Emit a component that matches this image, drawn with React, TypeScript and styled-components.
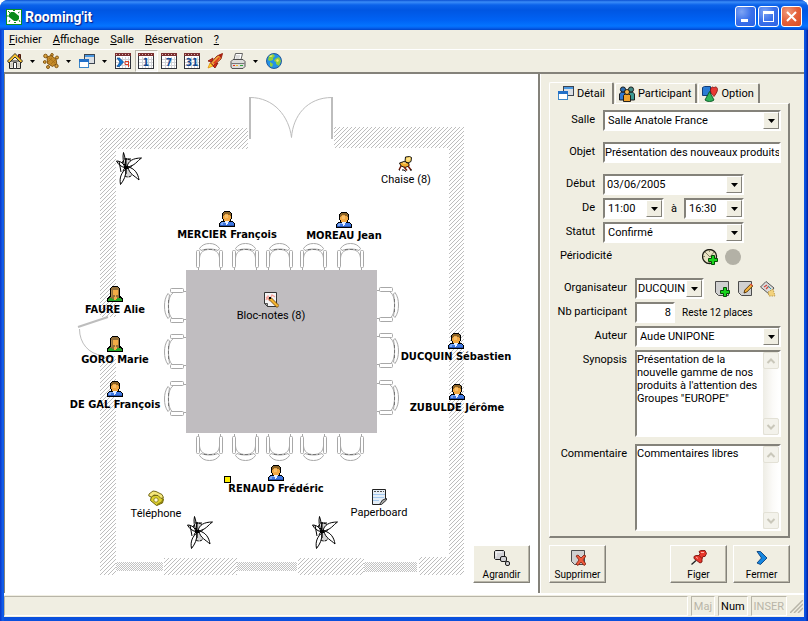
import React from "react";
import styled, { createGlobalStyle, css } from "styled-components";

const face = "#f0eee2";
const shade = "#84827a";
const softShade = "#b8b5a8";
const uiFont = 'Roboto, "Liberation Sans", sans-serif';
const boldFont = '"DejaVu Sans Condensed", "DejaVu Sans", sans-serif';

const GlobalStyle = createGlobalStyle`
  * { box-sizing: border-box; }
  html, body { margin: 0; padding: 0; background: #fff; }
  body, button, input, select, textarea {
    font-family: ${uiFont};
    font-size: 11px;
    line-height: 13px;
    color: #000;
  }
  svg { display: block; flex: none; }
`;

/* ---------- window frame ---------- */

const Window = styled.div`
  display: flex;
  flex-direction: column;
  min-height: 100vh;
  background: linear-gradient(90deg, #0a34c8 0, #1263ee 3px, #0a50dd 4px, #0a50dd calc(100% - 4px), #0c57e6 calc(100% - 3px), #001fa0 100%);
  border-radius: 8px 8px 0 0;
  overflow: hidden;
`;

const TitleBar = styled.header`
  display: flex;
  align-items: center;
  gap: 3px;
  height: 30px;
  padding: 3px 6px 0 6px;
  background: linear-gradient(180deg, #0a4fd2 0, #3a8cf8 2px, #0b62ea 5px, #0056e2 10px, #0062f4 20px, #0474ff 26px, #0560ee 28px, #0044c8 100%);
`;

const Title = styled.h1`
  flex: 1;
  margin: 0;
  font-size: 14px;
  font-weight: 700;
  line-height: 18px;
  color: #fff;
  text-shadow: 1px 1px 1px #0a1883;
`;

const CaptionButtons = styled.div`
  display: flex;
  gap: 2px;
`;

const CaptionButton = styled.button<{ $close?: boolean }>`
  display: grid;
  place-items: center;
  width: 21px;
  height: 21px;
  padding: 0;
  border: 1px solid #fff;
  border-radius: 3px;
  background: ${(p) =>
    p.$close
      ? "radial-gradient(circle at 30% 25%, #ef9a7c 0, #e4603a 50%, #d84c22 100%)"
      : "radial-gradient(circle at 30% 25%, #7ea4f4 0, #3a70ea 50%, #2a62e4 100%)"};
`;

const Body = styled.div`
  flex: 1;
  display: flex;
  flex-direction: column;
  margin: 0 4px 4px 4px;
  background: ${face};
`;

const MenuBar = styled.nav`
  display: flex;
  height: 20px;
  padding: 0 0 0 5px;
  gap: 11px;
  align-items: center;
  border-bottom: 1px solid #fff;
`;

const MenuItem = styled.button`
  padding: 0;
  border: 0;
  background: none;
`;

const ToolBar = styled.div`
  display: flex;
  align-items: center;
  height: 24px;
  border-bottom: 2px solid ${shade};
`;

const ToolButton = styled.button<{ $pressed?: boolean }>`
  display: flex;
  align-items: center;
  width: 23px;
  height: 22px;
  padding: 0 4px 0 3px;
  border: 0;
  background: none;
  ${(p) =>
    p.$pressed &&
    css`
      padding: 0 3px 0 2px;
      border: 1px solid;
      border-color: ${softShade} #fff #fff ${softShade};
      background: #f8f7f2;
    `}
`;

const DropButton = styled.button`
  display: flex;
  align-items: center;
  width: 13px;
  height: 22px;
  padding: 0 0 0 3px;
  border: 0;
  background: none;
`;

const Main = styled.main`
  flex: 1;
  display: flex;
  border-left: 1px solid ${shade};
`;

/* ---------- room plan ---------- */

const Plan = styled.section`
  position: relative;
  flex: 1;
  min-width: 533px;
  min-height: 519px;
  background: #fff;
  border-right: 2px solid ${shade};
`;

const Place = styled.div<{ $x: number; $y: number; $bold?: boolean }>`
  position: absolute;
  left: ${(p) => p.$x - 70}px;
  top: ${(p) => p.$y}px;
  width: 140px;
  display: flex;
  flex-direction: column;
  align-items: center;
  line-height: 15px;
  white-space: nowrap;
  ${(p) =>
    p.$bold &&
    css`
      font-family: ${boldFont};
      font-weight: 700;
    `}
`;

const Enlarge = styled.div`
  position: absolute;
  right: 8px;
  bottom: 10px;
`;

/* ---------- side panel ---------- */

const Side = styled.aside`
  flex: 0 0 264px;
  display: flex;
  flex-direction: column;
  padding: 7px 14px 10px 8px;
  border-left: 1px solid #fff;
`;

const Tabs = styled.div`
  display: flex;
  align-items: flex-end;
  height: 22px;
`;

const Tab = styled.button<{ $active?: boolean }>`
  display: flex;
  align-items: center;
  gap: 3px;
  height: ${(p) => (p.$active ? 22 : 20)}px;
  padding: ${(p) => (p.$active ? "0 7px 1px 8px" : "0 4px 0 3px")};
  margin-bottom: ${(p) => (p.$active ? -1 : 0)}px;
  margin-right: 1px;
  border: 0;
  border-top: 1px solid #fff;
  border-left: 1px solid #fff;
  border-right: 2px solid ${shade};
  border-radius: 2px 2px 0 0;
  background: ${face};
  z-index: ${(p) => (p.$active ? 1 : 0)};
`;

const Sheet = styled.form`
  flex: 1;
  display: flex;
  flex-direction: column;
  gap: 11px;
  padding: 6px 7px 5px 4px;
  border: 1px solid #fff;
  border-right: 2px solid ${shade};
  border-bottom: 2px solid ${shade};
`;

const Group = styled.div`
  display: flex;
  flex-direction: column;
  gap: 3px;
`;

const Row = styled.div<{ $label?: number; $after?: number }>`
  display: grid;
  grid-template-columns: ${(p) => p.$label ?? 41}px 1fr;
  column-gap: 8px;
  min-height: 21px;
  margin-bottom: ${(p) => p.$after ?? 0}px;
`;

const Label = styled.label`
  padding-top: 3px;
  text-align: right;
  white-space: nowrap;
`;

const Cells = styled.div`
  display: flex;
  align-items: center;
`;

const sunken = css`
  border: 2px solid;
  border-color: ${shade} #fff #fff ${shade};
  background: #fff;
`;

const Combo = styled.div<{ $width?: number }>`
  ${sunken}
  display: grid;
  grid-template-columns: minmax(0, 1fr) 16px;
  width: ${(p) => (p.$width ? `${p.$width}px` : "100%")};
  height: 21px;
`;

const comboText = css`
  width: 100%;
  height: 17px;
  padding: 0 0 0 3px;
  border: 0;
  outline: 0;
  background: transparent;
`;

const ComboSelect = styled.select<{ $tight?: boolean }>`
  ${comboText}
  padding-left: ${(p) => (p.$tight ? 1 : 3)}px;
  grid-area: 1 / 1 / 2 / 2;
  appearance: none;
  overflow: hidden;
  text-overflow: clip;
`;

const ComboInput = styled.input`
  ${comboText}
  padding-left: 2px;
`;

const raised = css`
  border: 1px solid;
  border-color: #fff ${shade} ${shade} #fff;
  background: ${face};
`;

const ArrowBox = styled.span`
  ${raised}
  display: grid;
  place-items: center;
  height: 17px;
  pointer-events: none;
`;

const ArrowButton = styled.button`
  ${raised}
  display: grid;
  place-items: center;
  height: 17px;
  padding: 0;
`;

const TextBox = styled.input<{ $width?: number; $right?: boolean }>`
  ${sunken}
  width: ${(p) => (p.$width ? `${p.$width}px` : "100%")};
  height: 21px;
  padding: 0 ${(p) => (p.$right ? 2 : 0)}px 0 0;
  outline: 0;
  text-align: ${(p) => (p.$right ? "right" : "left")};
`;

const To = styled.label`
  width: 20px;
  text-align: center;
`;

const Hint = styled.span`
  margin-left: 7px;
  font-size: 10px;
`;

const Actions = styled.div<{ $end?: boolean }>`
  display: flex;
  gap: 7px;
  margin-left: ${(p) => (p.$end ? "auto" : "10px")};
  padding-right: ${(p) => (p.$end ? 40 : 0)}px;
`;

const IconButton = styled.button`
  width: 16px;
  height: 16px;
  padding: 0;
  border: 0;
  background: none;
`;

const Memo = styled.div`
  ${sunken}
  display: flex;
  height: 87px;
`;

const MemoText = styled.textarea`
  flex: 1;
  min-width: 0;
  padding: 1px 0 0 0;
  border: 0;
  outline: 0;
  resize: none;
  overflow: hidden;
  background: transparent;
`;

const ScrollStrip = styled.div`
  display: flex;
  flex-direction: column;
  justify-content: space-between;
  width: 16px;
  background: linear-gradient(90deg, #eeede5, #fbfaf8 60%, #fff);
`;

const ScrollButton = styled.button`
  display: grid;
  place-items: center;
  width: 16px;
  height: 17px;
  padding: 0;
  border: 1px solid #e3e1d6;
  border-radius: 2px;
  background: #f3f2eb;
`;

const Footer = styled.div`
  display: flex;
  gap: 6px;
  margin-top: 7px;
`;

const BigButton = styled.button<{ $push?: boolean }>`
  display: flex;
  flex-direction: column;
  align-items: center;
  gap: 2px;
  width: 57px;
  height: 38px;
  margin-right: ${(p) => (p.$push ? "auto" : "0")};
  padding: 4px 0 0 0;
  border: 1px solid;
  border-color: #fff ${shade} ${shade} #fff;
  box-shadow: inset -1px -1px 0 ${softShade};
  background: ${face};
  font-size: 10px;
`;

/* ---------- status bar ---------- */

const StatusBar = styled.footer`
  display: flex;
  align-items: center;
  gap: 3px;
  height: 24px;
  padding: 1px 1px 1px 0;
  border-top: 2px solid #fff;
`;

const StatusCell = styled.span<{ $grow?: boolean; $off?: boolean }>`
  flex: ${(p) => (p.$grow ? "1" : "none")};
  height: 20px;
  padding: 3px 2px 0 2px;
  border: 1px solid;
  border-color: ${softShade} #fff #fff ${softShade};
  color: ${(p) => (p.$off ? softShade : "#000")};
`;

/* ---------- icons ---------- */

const Svg = ({ children }: { children: React.ReactNode }) => (
  <svg width="16" height="16" viewBox="0 0 16 16" aria-hidden="true">
    {children}
  </svg>
);

const DownArrow = ({ small }: { small?: boolean }) => (
  <svg width={small ? 5 : 7} height={small ? 3 : 4} viewBox="0 0 7 4" aria-hidden="true">
    <path d="M0 0h7L3.500 4z" fill="#000" />
  </svg>
);

const Logo = () => (
  <Svg>
    <rect width="16" height="16" fill="#0a9020" />
    <rect x="1" y="1" width="14" height="14" fill="#fff" />
    <path d="M3 5l2-2h3l5 4v3l-2 2H8L3 8z" fill="#0a8a1c" />
    <path d="M7 1.500h2M2 6v2M4 11l-1 2M8 13.500h2M12 4l1.500-1M2 2l2 2M13 11l1 2" stroke="#0a8a1c" />
  </Svg>
);

const House = () => (
  <Svg>
    <path d="M11.500 1.500h2v5h-2z" fill="#c23c22" stroke="#4a1a0a" />
    <path d="M2.500 8h11v7.500h-11z" fill="#e6e3d9" stroke="#222" />
    <path d="M.5 8L8 .5 15.500 8 14 10 8 4 2 10z" fill="#f7c230" stroke="#222" strokeWidth=".9" />
    <path d="M6.500 9.500h3v6h-3z" fill="#fff" stroke="#333" />
    <path d="M3.500 11h2M10.500 11h2M3.500 13h2M10.500 13h2" stroke="#b4b0a4" />
  </Svg>
);

const TableSet = () => (
  <Svg>
    <g fill="#dba642" stroke="#7a4c08" strokeWidth=".9">
      <circle cx="2.500" cy="3" r="1.800" />
      <circle cx="9" cy="1.800" r="1.300" />
      <circle cx="14" cy="4.500" r="1.500" />
      <circle cx="1.800" cy="9" r="1.400" />
      <circle cx="5" cy="14" r="1.500" />
      <circle cx="13.500" cy="13" r="1.700" />
      <path d="M4 4l4-1.500 5 3.500.8 4.500-4.300 3-5-3z" fill="#c48a28" />
    </g>
    <path d="M6 5l6 5M5 9l4-4M8 11l4-4" stroke="#a06812" strokeWidth=".7" />
  </Svg>
);

const Windows = () => (
  <Svg>
    <rect x="5.500" y="1.500" width="10" height="9" fill="#dcdfe2" stroke="#3c4450" />
    <rect x="6" y="2" width="9" height="2" fill="#4a98e0" />
    <rect x=".5" y="6.500" width="9" height="8" fill="#fff" stroke="#3b86c8" />
    <rect x="0" y="6" width="10" height="3" fill="#2270c8" />
  </Svg>
);

const Calendar = ({ text }: { text?: string }) => (
  <Svg>
    <rect x=".5" y=".5" width="15" height="15" fill="#fff" stroke="#31333a" />
    <path d="M1 6.500h14M1 9.500h14M1 12.500h14M4.500 4v11M7.500 4v11M10.500 4v11M13.500 4v11" stroke="#d2d4d8" />
    <rect x="0" y="0" width="16" height="3" fill="#7a3030" />
    <path d="M1 1.500h14" stroke="#e0b8b4" strokeDasharray="1 2" />
    {text ? (
      <text x="8" y="13" textAnchor="middle" fontFamily="DejaVu Sans Condensed" fontWeight="700" fontSize="10" fill="#134a92">
        {text}
      </text>
    ) : (
      <>
        <path d="M2 5h2.500l4 4-4 4.500H2L5 9z" fill="#0d78d8" stroke="#0a3f80" strokeWidth=".7" />
        <path d="M13 8.500h-3v3h3M13.500 8v6" stroke="#d83c24" fill="none" />
      </>
    )}
  </Svg>
);

const Rocket = () => (
  <Svg>
    <path d="M1 15l2-5 3 3z" fill="#ffd929" stroke="#e08a10" strokeWidth=".8" />
    <path d="M1 8l5-3-1 4zM7 10l4 0-3 5-2-2z" fill="#d62b18" stroke="#7d1208" strokeWidth=".8" />
    <path d="M3.500 10L10 3 15.500.5 14 6 6.500 12.500z" fill="#f0a83c" stroke="#8c1c0c" strokeWidth=".9" />
    <path d="M6 10l6-6 1 1-5 6z" fill="#e03a20" />
    <path d="M11.500 2.300L15.500.5 14 5z" fill="#a81c10" />
  </Svg>
);

const Printer = () => (
  <Svg>
    <path d="M5.500.5h7l-1.500 6h-7z" fill="#fff" stroke="#555" strokeWidth=".9" />
    <path d="M6 3h4M5.500 5h4" stroke="#aaa" strokeWidth=".8" />
    <path d="M1 8.500l2-2h10l2 2v5l-2 2H2l-1-1.500z" fill="#dcdcda" stroke="#444" strokeWidth=".9" />
    <path d="M1.500 10.500h13" stroke="#777" />
    <rect x="3" y="12" width="2" height="1" fill="#ea3323" />
    <rect x="6" y="12" width="2" height="1" fill="#f3c022" />
    <rect x="10" y="12" width="3" height="1" fill="#2fa83a" />
  </Svg>
);

const Globe = () => (
  <Svg>
    <circle cx="8" cy="8" r="7.500" fill="#2492e6" stroke="#1a4f93" strokeWidth=".9" />
    <path d="M3 3l4-2 2 2-2 2v2l-3 1-2-1zM9 6l4-2 2 4-2 5-3-2 0-2-2-1zM4 9l3 2-1 3-2-1z" fill="#8fcf3c" />
    <path d="M3 4l2-2 2 1-2 1zM10 7l2-1 1 2-2 1z" fill="#f0e470" />
  </Svg>
);

const Man = () => (
  <Svg>
    <path d="M5 0h6v1h1v1h1v6h-1v2h2v1h1v1h1v4H0v-4h1v-1h1v-1h2V8H3V2h1V1h1z" fill="#000" />
    <path d="M5 1h6v1h1v6h-1v2H5V8H4V2h1z" fill="#f2a843" />
    <path d="M5 1h6v1h1v3h-1V4H9V3H6v1H5v1H4V2h1z" fill="#8a6226" />
    <path d="M6 4h3v3H6z" fill="#f8bf68" />
    <path d="M2 11h12v1h1v3H1v-3h1z" fill="#3f78e2" />
    <path d="M3 11h3v1H4v2H2v-2h1z" fill="#80aaf4" />
    <path d="M6 10h4v1H9v2H8v1H7v-2H6z" fill="#e8efff" />
    <path d="M1 14h14v1H1z" fill="#2854b4" />
  </Svg>
);

const Woman = () => (
  <Svg>
    <path d="M5 0h6v1h1v1h1v8h1v1h1v1h1v4H0v-4h1v-1h1v-1h1V2h1V1h1z" fill="#000" />
    <path d="M2 12h12v1h1v2H1v-2h1z" fill="#2ba52b" />
    <path d="M5 1h6v1h1v10h-2v1H5v-1H3v-1h1V2h1z" fill="#94703a" />
    <path d="M4 4h1v7H4z" fill="#b38a4c" />
    <path d="M6 4h5v5H9v2h1v2H9v1H7v-3h1V9H6z" fill="#f2ab45" />
  </Svg>
);

const SeatIcon = () => (
  <Svg>
    <path d="M7.500 1l4-.5 2 1-.5 4-3 1.500-3-1.500z" fill="#ffd96a" stroke="#000" strokeWidth=".9" />
    <path d="M1.500 7L6 5.500l5 2V10l-4 1.500L3 10z" fill="#f0ad2e" stroke="#000" strokeWidth=".9" />
    <path d="M3 10l-2 4M6 11l3 3.500M10 10l3 4" stroke="#7a1c08" strokeWidth="1.500" fill="none" />
    <path d="M4 14h2l2 1.500M1 14h1M12 14h2" stroke="#000" fill="none" />
    <path d="M5 7h3M9 3h3" stroke="#ffeeb0" />
  </Svg>
);

const NoteIcon = () => (
  <Svg>
    <path d="M1.500.5h12v14h-9l-3-3z" fill="#f4f4f4" stroke="#333" />
    <path d="M3 8l2-4 2 3 2-4 3 2M3 5l4 4" stroke="#f6a49c" strokeWidth="1.300" fill="none" />
    <path d="M1.500 11.500l3 0 0 3z" fill="#aaa" stroke="#333" strokeWidth=".8" />
    <path d="M6 6l2.500 0 7.500 7.500-2 2L6.500 8z" fill="#f5b52e" stroke="#6b3e05" strokeWidth=".8" />
    <path d="M6 5h2v2H6z" fill="#000" />
  </Svg>
);

const PhoneIcon = () => (
  <Svg>
    <path d="M3.500 6l8-1 4 4-1 4-6 2.500-6-5z" fill="#dfd22f" stroke="#5a5000" strokeWidth=".9" />
    <path d="M1 4l4-3 3 .5 6 3 1.500 3-2.500 1-3-3-4-.5L3.500 7 .8 6z" fill="#f5e87c" stroke="#6a5e08" strokeWidth=".9" />
    <circle cx="8" cy="10" r="2.200" fill="#fffbd2" stroke="#7e7110" strokeWidth=".8" />
    <path d="M9 15l5-3 1-3" stroke="#8e8210" strokeWidth="1.500" fill="none" />
  </Svg>
);

const BoardIcon = () => (
  <Svg>
    <path d="M1.500.5h13v10l-5 5h-8z" fill="#e6eef6" stroke="#222" />
    <path d="M2 5.500h12M2 8.500h11M2 11.500h6" stroke="#a2c8ee" />
    <path d="M3 2.500h10" stroke="#555" strokeDasharray="2 1" />
    <path d="M15.500 9.500l-4 1.500-3 4.500h2l5-4.500z" fill="#a6a6a6" stroke="#222" strokeWidth=".9" />
  </Svg>
);

const People = () => (
  <Svg>
    <g stroke="#111" strokeWidth=".9">
      <path d="M.5 14V8l2-2h3l1.500 2v6z" fill="#2f77d0" />
      <path d="M9 14V8l1.500-2h3l2 2v6z" fill="#3c9a94" />
      <circle cx="4" cy="3.500" r="2.600" fill="#2b6cb0" />
      <circle cx="12" cy="3.500" r="2.600" fill="#448a86" />
      <path d="M4.500 15.500V9.500L6 8h4l1.500 1.500v6z" fill="#f0a22c" />
      <circle cx="8" cy="6" r="2.500" fill="#f5b54a" />
    </g>
  </Svg>
);

const Shapes = () => (
  <Svg>
    <path d="M.5 1.500l2-1h6v9h-8z" fill="#2a7cd4" stroke="#123c78" />
    <path d="M8.500 4.500c0-3.500 2.500-4.500 3.500-2.500 1-2 3.500-1 3.500 1.500S13 9 12 10.500C11 9 8.500 7.500 8.500 4.500z" fill="#e83a34" stroke="#7c0f0c" strokeWidth=".8" />
    <path d="M7.500 5.500l4.500 8.500c-2 2-7 2-9 0z" fill="#2fb45a" stroke="#0a5524" strokeWidth=".9" />
  </Svg>
);

const plus = "M9.500 6.500h3v3h3v3h-3v3h-3v-3h-3v-3h3z";

const ClockPlus = () => (
  <Svg>
    <circle cx="7.500" cy="7.500" r="7" fill="#e9e2c4" stroke="#1c1c14" strokeWidth="1.300" />
    <path d="M3 3l5 5 4-5M7.500 1v2M1 7.500h2M7.500 12v2" stroke="#8a8468" fill="none" />
    <path d={plus} fill="#18d41c" stroke="#064d08" />
  </Svg>
);

const Dot = () => (
  <Svg>
    <circle cx="8" cy="8" r="8" fill="#b3b1a6" />
  </Svg>
);

const Sheetlet = () => <path d="M1.500.5h13v14h-10l-3-3z" fill="#d0d0d0" stroke="#4c4c4c" />;

const PagePlus = () => (
  <Svg>
    <Sheetlet />
    <path d={plus} fill="#18d41c" stroke="#064d08" />
  </Svg>
);

const PageEdit = () => (
  <Svg>
    <Sheetlet />
    <path d="M7 12l.8-3 6-6 2 2-6 6z" fill="#f3b13a" stroke="#4c2c06" strokeWidth=".9" />
    <path d="M13 3.500l1-1 1.800 1.800-1 1z" fill="#e2523c" />
  </Svg>
);

const PageClean = () => (
  <Svg>
    <path d="M.5 6L6 .5 14 7l-5 6z" fill="#dadada" stroke="#444" strokeWidth=".9" />
    <path d="M4 6l3-2M6 8l3-3" stroke="#d2473a" strokeWidth="1.200" />
    <path d="M8 5l3 3" stroke="#2f9aa0" />
    <path d="M8 11l5-3 2 7-6 0z" fill="#f2d27c" stroke="#b08c3a" strokeWidth=".8" strokeDasharray="1.500 1" />
  </Svg>
);

const Boxes = () => (
  <Svg>
    <g fill="#d2d2d6" stroke="#1c1c1c" strokeWidth="1">
      <path d="M.5 1.500l1-1h8l1 1v7l-1 1h-8l-1-1z" />
      <rect x="6.500" y="6.500" width="6" height="5" rx="1.500" />
      <rect x="11.500" y="11.500" width="4" height="4" rx="1.500" />
    </g>
    <path d="M2 6.500V2H8" stroke="#fff" fill="none" />
  </Svg>
);

const PageDelete = () => (
  <Svg>
    <Sheetlet />
    <path d="M6 6l2-1 3 3 3-3 2 1-3 4 3 4-2 1.500-3-3.500-3 3.500-2-1.500 3-4z" fill="#ee5a3c" stroke="#7c1c0c" strokeWidth=".8" />
  </Svg>
);

const Pin = () => (
  <Svg>
    <path d="M.5 14.500L5 10.500" stroke="#222" strokeWidth="1.300" />
    <path d="M8 1.500L10 .5h4l1.500 3-1.500 3h-2l-1 2.500 0 3-2 1L3 8.500V6.500l2-1h3l1-2z" fill="#e8382c" stroke="#7e110c" strokeWidth=".9" />
    <path d="M10 2.500h3M5 7l2 1.500" stroke="#ffb0a4" />
    <path d="M8 5.500l3 3" stroke="#8e140e" />
  </Svg>
);

const Chevron = () => (
  <Svg>
    <path d="M3 1.500h3.500L13 8l-6.500 6.500L3 13l4.500-5z" fill="#1686e0" stroke="#0b3f7a" strokeWidth=".9" />
  </Svg>
);

const Chev = ({ down }: { down?: boolean }) => (
  <svg width="10" height="6" viewBox="0 0 9 6" aria-hidden="true">
    <path d={down ? "M1 1l3.500 3.500L8 1" : "M1 5l3.500-3.500L8 5"} fill="none" stroke="#c9c7ba" strokeWidth="2" />
  </svg>
);

const Grip = () => (
  <svg width="13" height="13" viewBox="0 0 13 13" aria-hidden="true">
    <path d="M0 13L13 0M4 13l9-9M8 13l5-5" stroke={softShade} strokeWidth="1.500" />
  </svg>
);

/* ---------- plan drawing ---------- */

const line = "#a8a8a8";

const ChairEnd = ({ x, y, flip }: { x: number; y: number; flip?: boolean }) => (
  <g transform={`translate(${x} ${y})${flip ? " scale(1 -1)" : ""}`} fill="#fff" stroke={line}>
    <path d="M3.500 15C4 9 8 6.500 13.500 6.500S23 9 23.500 15" fill="none" />
    <path d="M2.500 24v3M24.500 24v3" />
    <path d="M3.500 5.500C6 2 9 .5 13.500.5S21 2 23.500 5.500L22 7.500C17 5.500 10 5.500 5 7.500z" />
    <path d="M8 6.500h11" stroke="#777" strokeDasharray="3 2" />
    <rect x=".5" y="7.500" width="3" height="17" rx="1" />
    <rect x="23.500" y="7.500" width="3" height="17" rx="1" />
  </g>
);

const ChairSide = ({ x, y, flip }: { x: number; y: number; flip?: boolean }) => (
  <g transform={`translate(${x} ${y})${flip ? " scale(-1 1)" : ""}`} fill="#fff" stroke={line}>
    <path d="M11 3.500C6 6 4.500 11 4.500 18S6 30 11 32.500" fill="none" />
    <path d="M19 3.500h3M19 31.500h3" />
    <path d="M4 5.500C1.500 9 .5 13 .5 18S1.500 27 4 30.500L5.500 29C4 23 4 13 5.500 7z" />
    <path d="M4.500 12v13" stroke="#777" strokeDasharray="3 2" />
    <rect x="6.500" y=".5" width="13" height="4" rx="1" />
    <rect x="6.500" y="30.500" width="13" height="4" rx="1" />
  </g>
);

const Plant = ({ x, y }: { x: number; y: number }) => (
  <g transform={`translate(${x} ${y})`} fill="#fff" stroke="#000" strokeWidth="1">
    <circle cx="11" cy="12" r="5" fill="#d5d5d5" strokeDasharray="3 1" />
    <circle cx="12" cy="20" r="5" fill="#d5d5d5" strokeDasharray="3 1" />
    <path d="M9.500 15C7 10 6.500 5 7.500.5 9 5 10 10 9.500 15z" />
    <path d="M11 15C12 9 17 6 25.500 6 21 9 19 14 11 15z" />
    <path d="M12 15c6 1 10 6 11 13-4-4-10-6-11-13z" />
    <path d="M10 17C10 24 8 28 4.500 32.500 3 25 6 20 10 17z" />
    <path d="M9 15.500C5 15 2 12 .5 9 5 9 8 12 9 15.500z" />
    <path d="M3 9l2 11M8 7h7M10 6v16" />
    <path d="M8 14h4v3H8z" fill="#000" stroke="none" />
  </g>
);

const FloorPlan = () => (
  <svg width="533" height="519" viewBox="0 0 533 519" role="img" aria-label="Plan de la salle">
    <defs>
      <pattern id="hatch" width="4" height="4" patternUnits="userSpaceOnUse">
        <path d="M0 3h1v1H0zM1 2h1v1H1zM2 1h1v1H2zM3 0h1v1H3z" fill="#bdbdbd" shapeRendering="crispEdges" />
      </pattern>
      <pattern id="mesh" width="2" height="2" patternUnits="userSpaceOnUse">
        <path d="M0 0h1v1H0zM1 1h1v1H1z" fill="#c2c2c2" shapeRendering="crispEdges" />
      </pattern>
    </defs>
    <g fill="url(#hatch)">
      <path d="M95 54h16v189H95zM95 282h16v219H95zM111 54h132v21H111z" />
      <path d="M329 53h130v448H414v-18h30V74H329z" />
      <path d="M159 484h73v17h-73zM293 484h66v17h-66z" />
    </g>
    <g fill="url(#mesh)">
      <path d="M111 488h47v9h-47zM232 488h60v9h-60zM359 488h53v10h-53z" />
    </g>
    <g fill="none" stroke="#bdbdbd">
      <path d="M245 23v42M327 23v42" strokeWidth="2" />
      <path d="M245 23.500c24 0 39 19 41.500 40C288 42 302 23.500 327 23.500" />
      <path d="M73 253l30-10" strokeWidth="2" />
      <path d="M74.500 255c0 14 9 25 23 26.500" />
    </g>
    {[191, 227, 261, 295, 332].map((x) => (
      <React.Fragment key={x}>
        <ChairEnd x={x} y={169} />
        <ChairEnd x={x} y={387} flip />
      </React.Fragment>
    ))}
    {[213, 259, 306].map((y) => (
      <React.Fragment key={y}>
        <ChairSide x={159} y={y + 1} />
        <ChairSide x={394} y={y} flip />
      </React.Fragment>
    ))}
    <rect x="181" y="196" width="191" height="163" fill="#c0bdc0" />
    <Plant x={111} y={78} />
    <Plant x={182} y={442} />
    <Plant x={307} y={442} />
    <rect x="219.500" y="402.500" width="6" height="6" fill="#ffef00" stroke="#000" />
  </svg>
);

const people = [
  { name: "MERCIER François", x: 222, y: 137 },
  { name: "MOREAU Jean", x: 339, y: 138 },
  { name: "FAURE Alie", x: 110, y: 212, woman: true },
  { name: "GORO Marie", x: 110, y: 262, woman: true },
  { name: "DE GAL François", x: 110, y: 307 },
  { name: "DUCQUIN Sébastien", x: 451, y: 259 },
  { name: "ZUBULDE Jérôme", x: 452, y: 310 },
  { name: "RENAUD Frédéric", x: 271, y: 391 },
];

const equipment = [
  { name: "Chaise (8)", x: 401, y: 82, icon: <SeatIcon /> },
  { name: "Bloc-notes (8)", x: 266, y: 218, icon: <NoteIcon /> },
  { name: "Téléphone", x: 151, y: 416, icon: <PhoneIcon /> },
  { name: "Paperboard", x: 374, y: 415, icon: <BoardIcon /> },
];

const menus = ["Fichier", "Affichage", "Salle", "Réservation", "?"];

const tools: { label: string; icon: React.ReactNode; drop?: boolean; pressed?: boolean }[] = [
  { label: "Accueil", icon: <House />, drop: true },
  { label: "Salles", icon: <TableSet />, drop: true },
  { label: "Fenêtres", icon: <Windows />, drop: true },
  { label: "Aujourd'hui", icon: <Calendar /> },
  { label: "Jour", icon: <Calendar text="1" />, pressed: true },
  { label: "Semaine", icon: <Calendar text="7" /> },
  { label: "Mois", icon: <Calendar text="31" /> },
  { label: "Lancer", icon: <Rocket /> },
  { label: "Imprimer", icon: <Printer />, drop: true },
  { label: "Internet", icon: <Globe /> },
];

const Choice = ({ id, value, width, tight }: { id: string; value: string; width?: number; tight?: boolean }) => (
  <Combo $width={width}>
    <ComboSelect id={id} defaultValue={value} $tight={tight}>
      <option>{value}</option>
    </ComboSelect>
    <ArrowBox>
      <DownArrow />
    </ArrowBox>
  </Combo>
);

const MemoField = ({ id, value }: { id: string; value: string }) => (
  <Memo>
    <MemoText id={id} defaultValue={value} />
    <ScrollStrip>
      <ScrollButton type="button" aria-label="Monter" disabled>
        <Chev />
      </ScrollButton>
      <ScrollButton type="button" aria-label="Descendre" disabled>
        <Chev down />
      </ScrollButton>
    </ScrollStrip>
  </Memo>
);

export default function App() {
  return (
    <Window>
      <GlobalStyle />
      <TitleBar>
        <Logo />
        <Title>Rooming'it</Title>
        <CaptionButtons>
          <CaptionButton aria-label="Réduire">
            <svg width="13" height="13" viewBox="0 0 13 13">
              <path d="M2 9h7v3H2z" fill="#fff" />
            </svg>
          </CaptionButton>
          <CaptionButton aria-label="Agrandir la fenêtre">
            <svg width="13" height="13" viewBox="0 0 13 13">
              <path d="M1 1h11v11H1zM2 4v7h9V4z" fill="#fff" fillRule="evenodd" />
            </svg>
          </CaptionButton>
          <CaptionButton aria-label="Fermer la fenêtre" $close>
            <svg width="13" height="13" viewBox="0 0 13 13">
              <path d="M2 2l9 9M11 2l-9 9" stroke="#fff" strokeWidth="2" />
            </svg>
          </CaptionButton>
        </CaptionButtons>
      </TitleBar>
      <Body>
        <MenuBar>
          {menus.map((m) => (
            <MenuItem key={m}>
              <u>{m[0]}</u>
              {m.slice(1)}
            </MenuItem>
          ))}
        </MenuBar>
        <ToolBar>
          {tools.map((t) => (
            <React.Fragment key={t.label}>
              <ToolButton aria-label={t.label} $pressed={t.pressed}>
                {t.icon}
              </ToolButton>
              {t.drop && (
                <DropButton aria-label={`${t.label} : options`}>
                  <DownArrow small />
                </DropButton>
              )}
            </React.Fragment>
          ))}
        </ToolBar>
        <Main>
          <Plan>
            <FloorPlan />
            {people.map((p) => (
              <Place key={p.name} $x={p.x} $y={p.y} $bold>
                {p.woman ? <Woman /> : <Man />}
                {p.name}
              </Place>
            ))}
            {equipment.map((e) => (
              <Place key={e.name} $x={e.x} $y={e.y}>
                {e.icon}
                {e.name}
              </Place>
            ))}
            <Enlarge>
              <BigButton>
                <Boxes />
                Agrandir
              </BigButton>
            </Enlarge>
          </Plan>
          <Side>
            <Tabs role="tablist">
              <Tab role="tab" aria-selected $active>
                <Windows />
                Détail
              </Tab>
              <Tab role="tab">
                <People />
                Participant
              </Tab>
              <Tab role="tab">
                <Shapes />
                Option
              </Tab>
            </Tabs>
            <Sheet>
              <Group>
                <Row $after={8}>
                  <Label htmlFor="salle">Salle</Label>
                  <Choice id="salle" value="Salle Anatole France" />
                </Row>
                <Row $after={8}>
                  <Label htmlFor="objet">Objet</Label>
                  <TextBox id="objet" defaultValue="Présentation des nouveaux produits" />
                </Row>
                <Row>
                  <Label htmlFor="debut">Début</Label>
                  <Combo $width={141}>
                    <ComboInput id="debut" defaultValue="03/06/2005" />
                    <ArrowButton type="button" aria-label="Choisir une date">
                      <DownArrow />
                    </ArrowButton>
                  </Combo>
                </Row>
                <Row>
                  <Label htmlFor="de">De</Label>
                  <Cells>
                    <Choice id="de" value="11:00" width={61} />
                    <To htmlFor="a">à</To>
                    <Choice id="a" value="16:30" width={60} />
                  </Cells>
                </Row>
                <Row>
                  <Label htmlFor="statut">Statut</Label>
                  <Choice id="statut" value="Confirmé" width={141} />
                </Row>
                <Row $label={58}>
                  <Label as="span">Périodicité</Label>
                  <Cells>
                    <Actions $end>
                      <IconButton type="button" aria-label="Ajouter une périodicité">
                        <ClockPlus />
                      </IconButton>
                      <IconButton type="button" aria-label="Périodicité inactive">
                        <Dot />
                      </IconButton>
                    </Actions>
                  </Cells>
                </Row>
              </Group>
              <Group>
                <Row $label={73}>
                  <Label htmlFor="organisateur">Organisateur</Label>
                  <Cells>
                    <Choice id="organisateur" value="DUCQUIN Sébastien" width={69} tight />
                    <Actions>
                      <IconButton type="button" aria-label="Ajouter">
                        <PagePlus />
                      </IconButton>
                      <IconButton type="button" aria-label="Modifier">
                        <PageEdit />
                      </IconButton>
                      <IconButton type="button" aria-label="Effacer">
                        <PageClean />
                      </IconButton>
                    </Actions>
                  </Cells>
                </Row>
                <Row $label={73}>
                  <Label htmlFor="nb">Nb participant</Label>
                  <Cells>
                    <TextBox id="nb" $width={40} $right defaultValue="8" />
                    <Hint>Reste 12 places</Hint>
                  </Cells>
                </Row>
                <Row $label={73}>
                  <Label htmlFor="auteur">Auteur</Label>
                  <Choice id="auteur" value="Aude UNIPONE" />
                </Row>
                <Row $label={73} $after={4}>
                  <Label htmlFor="synopsis">Synopsis</Label>
                  <MemoField
                    id="synopsis"
                    value={'Présentation de la\nnouvelle gamme de nos\nproduits à l\'attention des\nGroupes "EUROPE"'}
                  />
                </Row>
                <Row $label={73}>
                  <Label htmlFor="commentaire">Commentaire</Label>
                  <MemoField id="commentaire" value="Commentaires libres" />
                </Row>
              </Group>
            </Sheet>
            <Footer>
              <BigButton $push>
                <PageDelete />
                Supprimer
              </BigButton>
              <BigButton>
                <Pin />
                Figer
              </BigButton>
              <BigButton>
                <Chevron />
                Fermer
              </BigButton>
            </Footer>
          </Side>
        </Main>
        <StatusBar>
          <StatusCell $grow />
          <StatusCell $off>Maj</StatusCell>
          <StatusCell>Num</StatusCell>
          <StatusCell $off>INSER</StatusCell>
          <Grip />
        </StatusBar>
      </Body>
    </Window>
  );
}
